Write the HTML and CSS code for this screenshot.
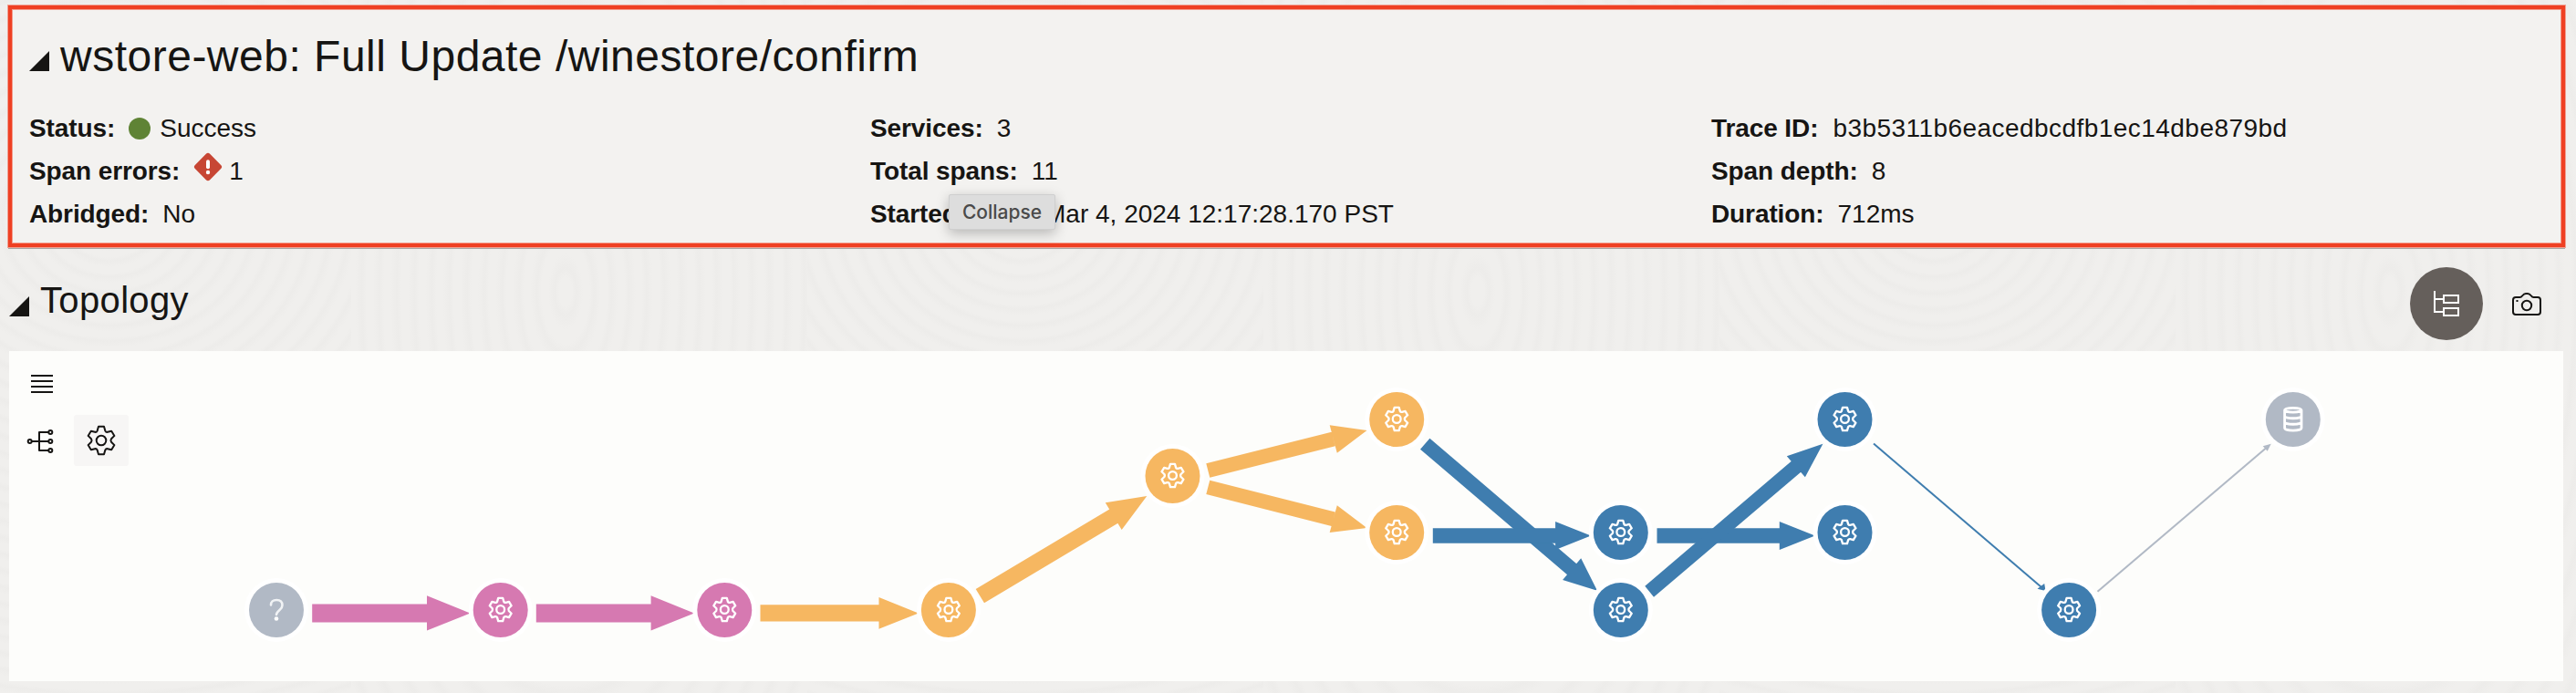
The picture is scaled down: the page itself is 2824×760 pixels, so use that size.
FILE: index.html
```html
<!DOCTYPE html>
<html lang="en">
<head>
<meta charset="utf-8">
<title>Trace details</title>
<link rel="stylesheet" href="styles.css">
</head>
<body>
<div class="backdrop"><i></i><i></i><i></i><i></i><i></i><i></i></div>
<main class="page">
  <section class="summary">
    <h1 class="summary-title"><span class="caret"></span><span class="title-text">wstore-web: Full Update /winestore/confirm</span></h1>
    <div class="facts">
      <div class="col">
        <div class="fact"><b>Status:</b><span class="dot"></span><span>Success</span></div>
        <div class="fact"><b>Span errors:</b><svg class="err" viewBox="0 0 32 32"><rect x="4.500" y="4.500" width="23" height="23" rx="3" transform="rotate(45 16 16)"/><path d="M16 10.200v6"/><circle cx="16" cy="22" r="2.200"/></svg><span>1</span></div>
        <div class="fact"><b>Abridged:</b><span>No</span></div>
      </div>
      <div class="col">
        <div class="fact"><b>Services:</b><span>3</span></div>
        <div class="fact"><b>Total spans:</b><span>11</span></div>
        <div class="fact"><b>Started:</b><span class="date">Mar 4, 2024 12:17:28.170 PST</span><span class="tooltip">Collapse</span></div>
      </div>
      <div class="col">
        <div class="fact"><b>Trace ID:</b><span class="hash">b3b5311b6eacedbcdfb1ec14dbe879bd</span></div>
        <div class="fact"><b>Span depth:</b><span>8</span></div>
        <div class="fact"><b>Duration:</b><span>712ms</span></div>
      </div>
    </div>
  </section>

  <header class="topo-head">
    <h2 class="topo-title"><span class="caret"></span><span>Topology</span></h2>
    <div class="actions">
      <button class="round" aria-label="Tree layout"><svg width="28" height="28" viewBox="0 0 28 28"><path d="M1 0v23h10M1 9h10M11 5h16v8H11zM11 19h16v8H11z"/></svg></button>
      <button class="plain" aria-label="Snapshot"><svg width="32" height="26" viewBox="0 0 32 26"><path d="M4 6h4.500q1.500 0 2.500-1.500Q13 2 15 2h2q2 0 4 2.500Q22 6 23.500 6H28q3 0 3 3v13q0 3-3 3H4q-3 0-3-3V9q0-3 3-3z"/><circle cx="16" cy="15" r="5.200"/><path d="M4.500 10h2"/></svg></button>
    </div>
  </header>

  <section class="topology">
    <svg class="graph" viewBox="10 385 2800 362">
      <defs>
        <path id="gear" d="M-3-15.200H3L4.400-10.400Q5.200-8.800 7-9.200L11.200-10.300L14.400-5.100L11-1.800Q9.800 0 11 1.800L14.400 5.100L11.200 10.300L7 9.200Q5.200 8.800 4.400 10.400L3 15.200H-3L-4.400 10.400Q-5.200 8.800-7 9.200L-11.200 10.300L-14.400 5.100L-11 1.800Q-9.800 0-11-1.800L-14.400-5.100L-11.200-10.300L-7-9.200Q-5.200-8.800-4.400-10.400ZM5.300 0A5.300 5.300 0 1 1-5.300 0A5.300 5.300 0 1 1 5.300 0"/>
        <g id="node"><circle class="halo" r="35"/><circle r="30"/><use href="#gear" class="gear" transform="translate(0 -.5) scale(.83)"/></g>
      </defs>
      <!-- toolbar glyphs -->
      <g class="tool">
        <rect class="tool-bg" x="81" y="455" width="60" height="56" rx="3"/>
        <path d="M34 412h24M34 418h24M34 424h24M34 430h24"/>
        <path d="M35 484h18M53 474H43v20h10"/>
        <circle cx="32.700" cy="484" r="2"/><circle cx="55.300" cy="474" r="2"/><circle cx="55.300" cy="484" r="2"/><circle cx="55.300" cy="494" r="2"/>
        <use href="#gear" x="111" y="483"/>
      </g>
      <!-- edges -->
      <g class="pink">
        <path d="M342.200 662.500H468V682.500H342.200zM468 653.300L515.500 672.500L468 691.500z"/>
        <path d="M587.800 662.500H713.600V682.500H587.800zM713.600 653.300L761.100 672.500L713.600 691.500z"/>
      </g>
      <g class="orange">
        <path d="M833.500 663.200H963.500V681.600H833.500zM963.500 655L1006.900 672.400L963.500 689.700z"/>
        <path d="M1069.700 646L1216.300 558.400L1225.600 573.800L1079 661.300zM1211.800 551.300L1257.300 544L1229.700 581z"/>
        <path d="M1322.300 508.300L1459.700 473.700L1463.700 489.200L1326.300 523.700zM1457.700 466.300L1498.500 472L1465.800 496.700z"/>
        <path d="M1326.300 526.700L1463.700 561.500L1459.700 577L1322.300 542zM1465.800 554.300L1498.500 579L1457.700 584z"/>
      </g>
      <g class="blue">
        <path d="M1567.400 480.700L1728.300 618.200L1718.100 630.200L1557 492.700zM1733.200 612.300L1751 647.700L1713.100 636z"/>
        <path d="M1570.800 579.200H1705.100V595.800H1570.800zM1705.100 572L1744.100 587.500L1705.100 603z"/>
        <path d="M1816.500 579.200H1950.800V595.800H1816.500zM1950.800 572L1989.800 587.500L1950.800 603z"/>
        <path d="M1803.300 642.700L1963.900 505.700L1974.200 517.800L1813 654.700zM1958.800 500.300L1998.400 486.700L1978.900 523.300z"/>
        <path class="thin" d="M2054 486.500L2238 644"/><path d="M2241.200 640L2242.500 648L2233.500 645.800z"/>
      </g>
      <g class="gray"><path class="thin" d="M2299.500 648.700L2484 491.500"/><path d="M2480.700 489.300L2489.700 486.700L2485.700 494.700z"/></g>
      <!-- nodes -->
      <g class="gray">
        <g transform="translate(303 669)"><circle class="halo" r="35"/><circle r="30"/><path class="question" d="M-6-5.500Q-6-11 .3-11Q6.500-11 6.500-5.300Q6.500-2.500 3.500 0Q0 3 0 5"/><circle class="white" cy="9.500" r="2.300"/></g>
        <g transform="translate(2513.800 460)"><circle class="halo" r="35"/><circle r="30"/><path class="gear" d="M-9.200-10.200V9.500C-9.200 13 9.200 13 9.200 9.500V-10.200C9.200-13.500-9.200-13.500-9.200-10.200C-9.200-7.200 9.200-7.200 9.200-10.200M-9.200-3.500C-9.200-.5 9.200-.5 9.200-3.500M-9.200 3C-9.200 6 9.200 6 9.200 3"/></g>
      </g>
      <g class="pink"><use href="#node" x="548.700" y="669"/><use href="#node" x="794.300" y="669"/></g>
      <g class="orange"><use href="#node" x="1039.900" y="669"/><use href="#node" x="1285.500" y="522"/><use href="#node" x="1531.200" y="460"/><use href="#node" x="1531.200" y="584"/></g>
      <g class="blue"><use href="#node" x="1776.800" y="584"/><use href="#node" x="1776.800" y="669"/><use href="#node" x="2022.500" y="460"/><use href="#node" x="2022.500" y="584"/><use href="#node" x="2268.100" y="669"/></g>
    </svg>
  </section>
</main>
</body>
</html>
```
FILE: styles.css
```css
* { box-sizing: border-box; }
body {
  margin: 0;
  width: 2824px;
  height: 760px;
  overflow: hidden;
  background: #f0efed;
  color: #161513;
  font-family: "Liberation Sans", Arial, sans-serif;
}
h1, h2 { margin: 0; font-weight: 400; }

/* carved-wood texture behind the page */
.backdrop {
  position: absolute;
  inset: 0;
  overflow: hidden;
  display: flex;
  z-index: -1;
}
.backdrop i {
  flex: 0 0 500px;
  background: repeating-radial-gradient(ellipse 260px 220px at 47% 240px, #f0efed 0 3%, #edecea 5%, #f0efed 8%);
}
.backdrop i:first-child { margin-left: -115px; }
.backdrop i:nth-child(even) {
  background: repeating-radial-gradient(ellipse 240px 520px at 47% 320px, #f0efed 0 3%, #edecea 5%, #f0efed 8%);
}

.page { padding: 6px 12px 13px 9px; }

.summary {
  height: 265px;
  padding: 24px 19px 0;
  border: 4px solid #ef4023;
  background: #f3f2f0;
  box-shadow: 0 0 0 1px #f0a092, inset 0 0 0 1px #f39a8a, 0 2px 0 0 #a8a6a4;
}
.summary-title, .topo-title { display: flex; align-items: baseline; }
.summary-title { font-size: 48px; line-height: 56px; letter-spacing: .5px; gap: 12px; }
.caret {
  width: 22px;
  height: 22px;
  background: #161513;
  clip-path: polygon(100% 0, 100% 100%, 0 100%);
}
.facts { display: grid; grid-template-columns: 922px 922px 1fr; margin-top: 27px; }
.fact {
  position: relative;
  display: flex;
  align-items: center;
  height: 47px;
  font-size: 28px;
  line-height: 47px;
  white-space: nowrap;
}
.fact b { margin-right: 15px; letter-spacing: -.1px; }
.hash { margin-left: 1px; letter-spacing: .45px; }
.date { margin-left: 71px; }
.dot { width: 24px; height: 24px; margin-right: 10px; border-radius: 50%; background: #5f8335; }
.err { width: 32px; height: 32px; margin: -10px 7px 0 0; fill: #c74634; }
.err path { stroke: #fff; stroke-width: 4; stroke-linecap: round; }
.err circle { fill: #fff; }
.tooltip {
  position: absolute;
  left: 86px;
  top: 2px;
  width: 117px;
  height: 39px;
  border: 1px solid #cfcfcf;
  border-radius: 2px;
  background: #dddddd;
  box-shadow: 0 4px 14px rgba(0, 0, 0, .25);
  color: #4a4a4a;
  font: 500 21px/37px Inter, sans-serif;
  text-align: center;
}

.topo-head {
  display: flex;
  justify-content: space-between;
  align-items: center;
  height: 114px;
  padding: 10px 17px 0 1px;
}
.topo-title { margin-bottom: 8px; font-size: 40px; line-height: 48px; letter-spacing: .35px; gap: 12px; }
.topo-title .caret { position: relative; top: 4px; }
.actions { display: flex; align-items: center; gap: 23px; }
.actions button { display: grid; place-items: center; padding: 0; border: 0; background: none; }
.actions svg { fill: none; stroke: #161513; stroke-width: 2; }
.actions .round { width: 80px; height: 80px; border-radius: 50%; background: #655f5b; }
.actions .round svg { stroke: #fff; }
.actions .plain { width: 50px; height: 50px; }

.topology { width: 2800px; height: 362px; margin-left: 1px; background: #fdfdfb; }
.graph { display: block; width: 2800px; height: 362px; }
.pink { fill: #d679b1; }
.orange { fill: #f6b761; }
.blue { fill: #3f7daf; }
.gray { fill: #b1b9c5; }
.blue .thin { stroke: #3f7daf; stroke-width: 2; }
.gray .thin { stroke: #b1b9c5; stroke-width: 2; }
.halo, .white { fill: #fff; }
.gear { fill: none; stroke: #fff; stroke-width: 2.8; stroke-linejoin: round; }
.question { fill: none; stroke: #f1f3f5; stroke-width: 2.6; stroke-linecap: round; }
.tool { fill: none; stroke: #161513; stroke-width: 2; stroke-linejoin: round; }
.tool-bg { fill: #f7f6f5; stroke: none; }
```
